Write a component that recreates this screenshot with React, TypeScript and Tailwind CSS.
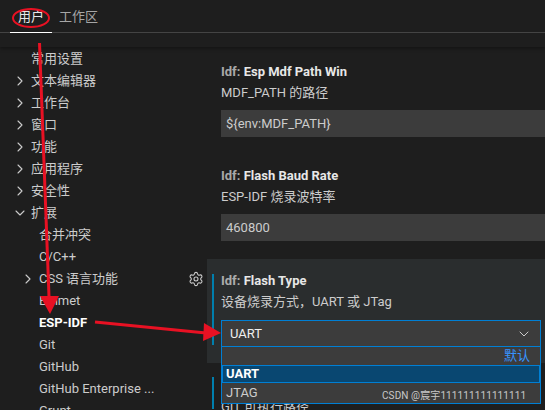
import React from 'react';
import { ChevronRight, ChevronDown, Settings } from 'lucide-react';

const font = "font-['Roboto','Noto_Sans_CJK_SC',sans-serif]";

const TreeRow = ({ label, indent = 0, arrow, bold = false, gear = false }: { label: string; indent?: number; arrow?: 'right' | 'down'; bold?: boolean; gear?: boolean }) => (
  <div className={`relative flex h-[22px] items-center text-[13px] ${bold ? 'font-bold text-white' : 'text-[#cccccc]'} ${indent ? 'pl-[39px]' : 'pl-[31px]'}`}>
    {arrow === 'right' && <ChevronRight size={16} strokeWidth={1.6} className={`absolute top-[3px] ${indent ? 'left-[20px]' : 'left-[12px]'}`} />}
    {arrow === 'down' && <ChevronDown size={16} strokeWidth={1.6} className="absolute top-[3px] left-[12px]" />}
    <span className="whitespace-nowrap">{label}</span>
    {gear && <Settings size={16} strokeWidth={1.6} className="absolute top-[3px] left-[188px]" />}
  </div>
);

const Setting = ({ prefix, name, desc, value, top }: { prefix: string; name: string; desc: string; value: string; top: string }) => (
  <div className={`ml-[14px] ${top}`}>
    <div className="h-[20px] text-[13px] font-bold leading-[20px] text-[#cccccc]">
      <span className="opacity-80">{prefix} </span>
      <span className="text-[#e7e7e7]">{name}</span>
    </div>
    <div className="mt-[1px] h-[20px] text-[13px] leading-[20px] text-[#cccccc]">{desc}</div>
    <div className="mt-[7px] flex h-[27px] items-center bg-[#3c3c3c] pl-[5px] text-[13px] text-[#cccccc]">{value}</div>
  </div>
);

export default function App() {
  return (
    <div className={`relative h-[410px] w-[545px] overflow-hidden bg-[#1e1e1e] ${font}`}>
      {/* tabs */}
      <div className="h-[47px] shadow-[0_1px_4px_rgba(0,0,0,0.45)]">
        <div className="flex h-[33px] items-stretch border-b border-[#444444] pl-[10px] text-[13px]">
          <div className="-mb-px flex w-[42px] items-center justify-center border-b border-white pt-[1px] text-[#e7e7e7]">用户</div>
          <div className="flex items-center pl-[7px] pt-[1px] text-[#a6a6a6]">工作区</div>
        </div>
      </div>

      <div className="flex">
        {/* tree */}
        <div className="h-[363px] w-[207px] shrink-0 overflow-hidden pt-[1px]">
          <TreeRow label="常用设置" />
          <TreeRow label="文本编辑器" arrow="right" />
          <TreeRow label="工作台" arrow="right" />
          <TreeRow label="窗口" arrow="right" />
          <TreeRow label="功能" arrow="right" />
          <TreeRow label="应用程序" arrow="right" />
          <TreeRow label="安全性" arrow="right" />
          <TreeRow label="扩展" arrow="down" />
          <TreeRow label="合并冲突" indent={1} />
          <TreeRow label="C/C++" indent={1} />
          <TreeRow label="CSS 语言功能" indent={1} arrow="right" gear />
          <TreeRow label="Emmet" indent={1} />
          <TreeRow label="ESP-IDF" indent={1} bold />
          <TreeRow label="Git" indent={1} />
          <TreeRow label="GitHub" indent={1} />
          <TreeRow label="GitHub Enterprise ..." indent={1} />
          <TreeRow label="Grunt" indent={1} />
        </div>

        {/* settings */}
        <div className="min-w-0 flex-1">
          <Setting top="mt-[15px]" prefix="Idf:" name="Esp Mdf Path Win" desc="MDF_PATH 的路径" value="${env:MDF_PATH}" />
          <Setting top="mt-[29px]" prefix="Idf:" name="Flash Baud Rate" desc="ESP-IDF 烧录波特率" value="460800" />

          <div className="relative mt-[18px] h-[104px] bg-[#2a2d2e] pl-[14px] pt-[12px]">
            <div className="absolute left-[5px] top-[15px] h-[71px] w-[2px] bg-[#007fad]" />
            <div className="h-[20px] text-[13px] font-bold leading-[20px] text-[#cccccc]">
              <span className="opacity-80">Idf: </span>
              <span className="text-[#e7e7e7]">Flash Type</span>
            </div>
            <div className="mt-[1px] h-[20px] text-[13px] leading-[20px] text-[#cccccc]">设备烧录方式，UART 或 JTag</div>
          </div>

          <div className="relative ml-[5px] mt-[14px] h-[32px] border-l-2 border-[#007fad] pl-[7px] pt-[20px] text-[13px] leading-[20px] text-[#cccccc]">
            GIT 可执行路径
          </div>
        </div>
      </div>

      {/* open select + dropdown */}
      <div className="absolute left-[221px] top-[320px] w-[320px] text-[13px] text-[#f0f0f0]">
        <div className="flex h-[27px] items-center justify-between border border-[#007fd4] bg-[#3c3c3c] pl-[8px] pr-[8px]">
          <span>UART</span>
          <ChevronDown size={16} strokeWidth={1.2} />
        </div>
        <div className="border border-t-0 border-[#007fd4] bg-[#3c3c3c]">
          <div className="flex h-[18px] items-center justify-end pr-[10px] text-[#3794ff]">默认</div>
          <div className="flex h-[18px] items-center border border-[#007fd4] bg-[#094771] pl-[3px] font-bold text-white">UART</div>
          <div className="flex h-[20px] items-center pl-[4px] text-[#cccccc]">JTAG</div>
        </div>
      </div>

      {/* watermark */}
      <div className="absolute left-[382px] top-[388px] whitespace-nowrap text-[10px] tracking-[0.1px] text-[#c8c8c8]">CSDN @宸宇111111111111111</div>

      {/* hand-drawn annotations */}
      <svg className="pointer-events-none absolute inset-0" width="545" height="410" viewBox="0 0 545 410">
        <ellipse cx="31" cy="18" rx="18" ry="9" fill="none" stroke="#e81123" strokeWidth="2" />
        <path d="M39.5 43 L49.5 310" stroke="#e81123" strokeWidth="3" fill="none" />
        <path d="M40 296 L50 314 L59 296 Z" fill="#e81123" />
        <path d="M95 322 L206 333" stroke="#e81123" strokeWidth="3" fill="none" />
        <path d="M204 323 L221 333 L203 341 Z" fill="#e81123" />
      </svg>
    </div>
  );
}
